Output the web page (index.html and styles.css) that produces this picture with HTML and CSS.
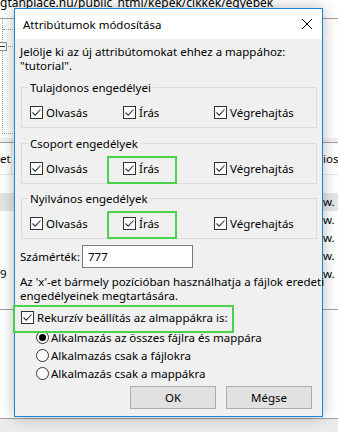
FILE: index.html
```html
<!DOCTYPE html>
<html>
<head>
<meta charset="utf-8">
<link rel="stylesheet" href="styles.css">
</head>
<body>
<div class="app">
  <div class="pathbar">gtanplace.hu/public_html/kepek/cikkek/egyebek</div>
  <div class="tree">
    <div class="trunk">
      <div class="twig"></div>
      <div class="twig"><span class="minus"></span></div>
    </div>
  </div>
  <div class="split"></div>
  <div class="list-head">
    <div class="cell-left sep">et</div>
    <div class="cell-right">ios</div>
  </div>
  <div class="row"><div class="cell-left"></div><div class="cell-right"></div></div>
  <div class="row sel"><div class="cell-left"></div><div class="cell-right">w.</div></div>
  <div class="row"><div class="cell-left"></div><div class="cell-right">w.</div></div>
  <div class="row"><div class="cell-left"></div><div class="cell-right">w.</div></div>
  <div class="row"><div class="cell-left"></div><div class="cell-right">w.</div></div>
  <div class="row"><div class="cell-left">9</div><div class="cell-right">w.</div></div>
  <div class="list-fill"></div>
  <div class="queue"></div>
  <div class="status"></div>
</div>

<div class="dialog">
  <div class="titlebar">
    <span>Attribútumok módosítása</span>
    <svg class="close" width="10" height="10" viewBox="0 0 10 10"><path d="M0 0L10 10M10 0L0 10" stroke="#000" stroke-width="1"/></svg>
  </div>
  <div class="content">
    <p class="intro">Jelölje ki az új attribútomokat ehhez a mappához:<br>"tutorial".</p>

    <div class="group first">
      <div class="group-title">Tulajdonos engedélyei</div>
      <div class="perm-row">
        <div class="check"><span class="box"><svg width="11" height="11" viewBox="0 0 11 11"><path d="M1.5 5.5L4.2 8.2L9.5 2.5" fill="none" stroke="#333" stroke-width="1.1"/></svg></span>Olvasás</div>
        <div class="check"><span class="box"><svg width="11" height="11" viewBox="0 0 11 11"><path d="M1.5 5.5L4.2 8.2L9.5 2.5" fill="none" stroke="#333" stroke-width="1.1"/></svg></span>Írás</div>
        <div class="check"><span class="box"><svg width="11" height="11" viewBox="0 0 11 11"><path d="M1.5 5.5L4.2 8.2L9.5 2.5" fill="none" stroke="#333" stroke-width="1.1"/></svg></span>Végrehajtás</div>
      </div>
    </div>

    <div class="group">
      <div class="group-title">Csoport engedélyek</div>
      <div class="perm-row">
        <div class="check"><span class="box"><svg width="11" height="11" viewBox="0 0 11 11"><path d="M1.5 5.5L4.2 8.2L9.5 2.5" fill="none" stroke="#333" stroke-width="1.1"/></svg></span>Olvasás</div>
        <div class="check hl"><span class="box"><svg width="11" height="11" viewBox="0 0 11 11"><path d="M1.5 5.5L4.2 8.2L9.5 2.5" fill="none" stroke="#333" stroke-width="1.1"/></svg></span>Írás</div>
        <div class="check"><span class="box"><svg width="11" height="11" viewBox="0 0 11 11"><path d="M1.5 5.5L4.2 8.2L9.5 2.5" fill="none" stroke="#333" stroke-width="1.1"/></svg></span>Végrehajtás</div>
      </div>
    </div>

    <div class="group last">
      <div class="group-title">Nyilvános engedélyek</div>
      <div class="perm-row">
        <div class="check"><span class="box"><svg width="11" height="11" viewBox="0 0 11 11"><path d="M1.5 5.5L4.2 8.2L9.5 2.5" fill="none" stroke="#333" stroke-width="1.1"/></svg></span>Olvasás</div>
        <div class="check hl"><span class="box"><svg width="11" height="11" viewBox="0 0 11 11"><path d="M1.5 5.5L4.2 8.2L9.5 2.5" fill="none" stroke="#333" stroke-width="1.1"/></svg></span>Írás</div>
        <div class="check"><span class="box"><svg width="11" height="11" viewBox="0 0 11 11"><path d="M1.5 5.5L4.2 8.2L9.5 2.5" fill="none" stroke="#333" stroke-width="1.1"/></svg></span>Végrehajtás</div>
      </div>
    </div>

    <div class="num-row">
      <span class="num-label">Számérték:</span>
      <div class="field">777</div>
    </div>

    <p class="note">Az 'x'-et bármely pozícióban használhatja a fájlok eredeti<br>engedélyeinek megtartására.</p>

    <div class="check hl rec"><span class="box"><svg width="11" height="11" viewBox="0 0 11 11"><path d="M1.5 5.5L4.2 8.2L9.5 2.5" fill="none" stroke="#333" stroke-width="1.1"/></svg></span>Rekurzív beállítás az almappákra is:</div>

    <div class="radios">
      <div class="radio-row"><span class="radio"><span class="dot"></span></span>Alkalmazás az összes fájlra és mappára</div>
      <div class="radio-row"><span class="radio"></span>Alkalmazás csak a fájlokra</div>
      <div class="radio-row"><span class="radio"></span>Alkalmazás csak a mappákra</div>
    </div>

    <div class="buttons">
      <div class="btn">OK</div>
      <div class="btn">Mégse</div>
    </div>
  </div>
</div>
</body>
</html>
```

FILE: styles.css
```css
* {
    box-sizing: border-box;
}
html, body {
    margin: 0;
    height: 100%;
}
body {
    font-family: "Noto Sans", "Open Sans", sans-serif;
    font-size: 11.5px;
    color: #000;
    background: #fff;
    overflow: hidden;
    position: relative;
}

/* window behind the dialog */
.app {
    height: 432px;
    display: flex;
    flex-direction: column;
}
.pathbar {
    margin-top: -5px;
    height: 24px;
    line-height: 15px;
    font-size: 12px;
    white-space: nowrap;
    border-bottom: 1px solid #a0a0a0;
}
.tree {
    height: 119px;
}
.trunk {
    margin-left: 2px;
    width: 13px;
    height: 115px;
    padding-top: 10px;
    border-left: 1px dotted #a0a0a0;
    border-bottom: 1px dotted #a0a0a0;
}
.twig {
    height: 17px;
    border-top: 1px dotted #a0a0a0;
}
.minus {
    display: block;
    width: 9px;
    height: 9px;
    margin: -5px 0 0 -5px;
    border: 1px solid #919191;
    background: #fff linear-gradient(#333, #333) no-repeat center / 5px 1px;
}
.split {
    height: 5px;
    background: #f0f0f0;
    border-bottom: 1px solid #a0a0a0;
}
.list-head {
    height: 32px;
    display: flex;
    justify-content: space-between;
    align-items: center;
    border-bottom: 1px solid #e5e5e5;
}
.list-head .cell-left {
    align-self: stretch;
    line-height: 31px;
}
.sep {
    border-right: 1px solid #e5e5e5;
}
.row {
    height: 18px;
    display: flex;
    justify-content: space-between;
    line-height: 18px;
}
.row.sel {
    background: #e5e5e5;
}
.cell-left {
    width: 12px;
    white-space: nowrap;
    overflow: hidden;
}
.cell-right {
    width: 15px;
    white-space: nowrap;
    overflow: hidden;
}
.list-fill {
    height: 27px;
    border-bottom: 1px solid #a0a0a0;
}
.queue {
    flex: 1;
}
.status {
    height: 14px;
    background: #ececec;
    border-top: 1px solid #a0a0a0;
}

/* dialog */
.dialog {
    position: absolute;
    left: 14px;
    top: 8px;
    width: 309px;
    background: #f0f0f0;
    border: 1px solid #1883d7;
    box-shadow: 0 0 14px rgba(0, 0, 0, 0.28);
}
.titlebar {
    height: 30px;
    background: #fff;
    display: flex;
    align-items: center;
    justify-content: space-between;
    padding: 0 10px 0 8px;
}
.content {
    padding: 6px 10px 7px 5px;
}
.intro, .note {
    margin: 0;
    line-height: 14px;
    white-space: nowrap;
}
.group {
    width: 296px;
    margin: 15px 0 0 1px;
    border: 1px solid #dcdcdc;
    padding: 0 8px 7px;
}
.group.first {
    margin-top: 14px;
}
.group.last {
    margin-top: 14px;
}
.group-title {
    width: fit-content;
    margin: -8px 0 9px -2px;
    padding: 0 2px;
    line-height: 15px;
    background: #f0f0f0;
}
.perm-row {
    display: grid;
    grid-template-columns: 93px 91px auto;
}
.check {
    position: relative;
    width: fit-content;
    height: 16px;
    display: flex;
    align-items: center;
    gap: 3px;
    white-space: nowrap;
}
.box {
    width: 13px;
    height: 13px;
    border: 1px solid #333;
    background: #fff;
    display: flex;
}
.hl::after {
    content: "";
    position: absolute;
    left: -16px;
    top: -4px;
    width: 66px;
    height: 24px;
    border: 2px solid #4cd14c;
}
.num-row {
    display: flex;
    align-items: center;
    margin-top: 6px;
}
.num-label {
    width: 62px;
}
.field {
    width: 111px;
    height: 23px;
    line-height: 21px;
    padding-left: 5px;
    background: #fff;
    border: 1px solid #7a7a7a;
}
.note {
    margin-top: 7px;
}
.rec {
    margin: 6px 0 0 1px;
}
.rec.hl::after {
    left: -8px;
    width: 217px;
}
.radios {
    margin-top: 3px;
    padding-left: 16px;
}
.radio-row {
    height: 18px;
    display: flex;
    align-items: center;
    gap: 2px;
    white-space: nowrap;
}
.radio {
    width: 13px;
    height: 13px;
    border: 1px solid #333;
    border-radius: 50%;
    background: #fff;
    display: flex;
    align-items: center;
    justify-content: center;
}
.dot {
    width: 7px;
    height: 7px;
    border-radius: 50%;
    background: #000;
}
.buttons {
    display: flex;
    justify-content: flex-end;
    gap: 10px;
    margin-top: 4px;
}
.btn {
    width: 86px;
    height: 23px;
    line-height: 21px;
    text-align: center;
    background: #e1e1e1;
    border: 1px solid #adadad;
}
```
